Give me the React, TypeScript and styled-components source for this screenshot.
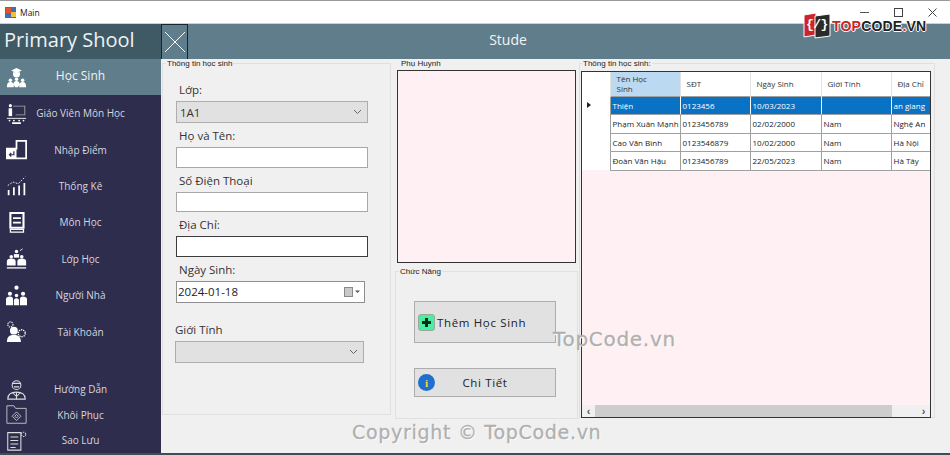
import React from 'react';
import styled, { createGlobalStyle } from 'styled-components';

const GlobalStyle = createGlobalStyle`
  html, body {
    margin: 0;
    padding: 0;
    overflow: hidden;
    background: #f0f0f0;
  }
  * { box-sizing: border-box; }
`;

const uiFont = `"Open Sans", "Noto Sans", sans-serif`;
const smallFont = `"Liberation Sans", Arial, sans-serif`;

const IconBase: React.FC<{ size?: number; children: React.ReactNode }> = ({ size = 24, children }) => (
  <svg width={size} height={size} viewBox="0 0 24 24" fill="#fff" stroke="none">
    {children}
  </svg>
);

const StudentIcon = () => (
  <IconBase>
    <path d="M12 1l6 3-6 3-6-3z" />
    <path d="M8 6h8v2a4 4 0 0 1-8 0z" />
    <circle cx="5" cy="15" r="2" />
    <circle cx="12" cy="14" r="2" />
    <circle cx="19" cy="15" r="2" />
    <path d="M1 23c0-4 1-6 4-6s4 2 4 6zM8.5 20c0-3 1-4 3.500-4s3.500 1 3.500 4l-2 3h-3zM15 23c0-4 1-6 4-6s4 2 4 6z" />
  </IconBase>
);
const TeacherIcon = () => (
  <IconBase>
    <path d="M8 3h14v11H11v-1h10V4H8z" fill="#aaa" />
    <circle cx="5" cy="3" r="1.800" />
    <path d="M3 6h4v9H3z" />
    <path d="M1 17h22v1H1z" />
    <circle cx="4" cy="20" r="1" /><circle cx="9" cy="20" r="1" /><circle cx="15" cy="20" r="1" /><circle cx="20" cy="20" r="1" />
    <path d="M7 22h10v2H7z" />
  </IconBase>
);
const EntryIcon = () => (
  <IconBase>
    <path d="M12 2h11v20H1V11h11z" fill="none" stroke="#fff" strokeWidth="2" />
    <path d="M1 11h11v11H1z" />
    <path d="M9 14v4H4m2-2-2 2 2 2" fill="none" stroke="#2f2d4e" strokeWidth="1.400" />
  </IconBase>
);
const ChartIcon = () => (
  <IconBase>
    <path d="M2 17h2v6H2zM8 14h2v9H8zM14 12h2v11h-2zM20 9h2v14h-2z" />
    <path d="M2 12l6-4 6 2 8-8" fill="none" stroke="#fff" strokeWidth="1" strokeDasharray="2 1.500" />
  </IconBase>
);
const BookIcon = () => (
  <IconBase>
    <path d="M5 1h15v17H5z" fill="none" stroke="#fff" strokeWidth="2.400" />
    <path d="M8 6h9v2H8zM8 11h9v2H8z" />
    <path d="M5 20h15v3H5z" fill="none" stroke="#fff" strokeWidth="1.400" />
  </IconBase>
);
const ClassIcon = () => (
  <IconBase>
    <circle cx="12" cy="4" r="2" />
    <path d="M9 7h6v4H9z" />
    <circle cx="6" cy="10" r="2" /><circle cx="18" cy="10" r="2" />
    <path d="M1 20v-5c0-2 2-3 5-3s5 1 5 3v5zM13 20v-5c0-2 2-3 5-3s5 1 5 3v5z" />
    <path d="M1 22h22v1.500H1z" />
    <path d="M16 3l3-2" stroke="#fff" strokeWidth="1" />
  </IconBase>
);
const FamilyIcon = () => (
  <IconBase>
    <circle cx="12" cy="3" r="2.400" />
    <circle cx="4.500" cy="10" r="2.400" />
    <circle cx="19.500" cy="10" r="2.400" />
    <circle cx="12" cy="12" r="2" />
    <path d="M0 23v-7c0-2 2-3 4.500-3S8 14 8 16v7zM16 23v-7c0-2 1-3 3.500-3s4.500 1 4.500 3v7zM9 23v-5c0-2 1-3 3-3s3 1 3 3v5z" />
  </IconBase>
);
const AccountIcon = () => (
  <IconBase>
    <circle cx="9" cy="11" r="4.500" />
    <path d="M1 24c0-6 3-8 8-8s8 2 8 8z" />
    <circle cx="5" cy="4" r="3" fill="none" stroke="#fff" strokeWidth="1.200" strokeDasharray="1.500 1" />
    <circle cx="18" cy="14" r="4" fill="none" stroke="#fff" strokeWidth="1.600" strokeDasharray="1.500 1" />
  </IconBase>
);
const GuideIcon = () => (
  <IconBase>
    <g fill="none" stroke="#ddd" strokeWidth="1.200">
      <circle cx="12" cy="7" r="5" />
      <path d="M7 5h10M9 9h6" />
      <path d="M2 23c0-6 4-8 10-8s10 2 10 8z" />
      <path d="M12 15v8M8 16l4 4 4-4" />
    </g>
  </IconBase>
);
const RestoreIcon = () => (
  <IconBase>
    <g fill="none" stroke="#ccc" strokeWidth="1">
      <path d="M1 2h8l2 3h12v17H1z" />
      <path d="M12 9l5 5-5 5-5-5z" />
      <path d="M12 12l2 2-2 2-2-2z" />
    </g>
  </IconBase>
);
const BackupIcon = () => (
  <IconBase>
    <g fill="none" stroke="#ddd" strokeWidth="1.200">
      <path d="M2 3h15v20H2z" />
      <path d="M5 8h9M5 12h9M5 16h9M5 20h6" />
      <circle cx="20" cy="5" r="2.500" strokeDasharray="1.500 1" />
    </g>
  </IconBase>
);

const navItems = [
  { label: 'Học Sinh', icon: <StudentIcon />, active: true },
  { label: 'Giáo Viên Môn Học', icon: <TeacherIcon /> },
  { label: 'Nhập Điểm', icon: <EntryIcon /> },
  { label: 'Thống Kê', icon: <ChartIcon /> },
  { label: 'Môn Học', icon: <BookIcon /> },
  { label: 'Lớp Học', icon: <ClassIcon /> },
  { label: 'Người Nhà', icon: <FamilyIcon /> },
  { label: 'Tài Khoản', icon: <AccountIcon /> },
];

const footerItems = [
  { label: 'Hướng Dẫn', icon: <GuideIcon /> },
  { label: 'Khôi Phục', icon: <RestoreIcon /> },
  { label: 'Sao Lưu', icon: <BackupIcon /> },
];

const students = [
  { name: 'Thiện', phone: '0123456', born: '10/03/2023', gender: '', address: 'an giang' },
  { name: 'Phạm Xuân Mạnh', phone: '0123456789', born: '02/02/2000', gender: 'Nam', address: 'Nghệ An' },
  { name: 'Cao Văn Bình', phone: '0123546879', born: '10/02/2000', gender: 'Nam', address: 'Hà Nội' },
  { name: 'Đoàn Văn Hậu', phone: '0123456789', born: '22/05/2023', gender: 'Nam', address: 'Hà Tây' },
];

const App: React.FC = () => (
  <Window>
    <GlobalStyle />
    <TitleBar>
      <svg width="11" height="11" viewBox="0 0 11 11">
        <rect width="11" height="11" fill="#3f6fb5" />
        <rect x="1" y="1" width="5" height="5" fill="#e2552b" />
        <rect x="6" y="5" width="5" height="5" fill="#f2c230" />
      </svg>
      <TitleText>Main</TitleText>
      <WindowControls>
        <svg width="11" height="11" viewBox="0 0 11 11"><path d="M1 5.500h9" stroke="#555" /></svg>
        <svg width="11" height="11" viewBox="0 0 11 11"><rect x="1.500" y="1.500" width="8" height="8" fill="none" stroke="#444" /></svg>
        <svg width="11" height="11" viewBox="0 0 11 11"><path d="M1.500 1.500l8 8M9.500 1.500l-8 8" stroke="#444" /></svg>
      </WindowControls>
    </TitleBar>

    <Header>
      <Brand>Primary Shool</Brand>
      <ToggleButton>
        <svg width="22" height="22" viewBox="0 0 22 22">
          <path d="M1 1l20 20M21 1L1 21" stroke="#fff" strokeWidth="1" />
        </svg>
      </ToggleButton>
      <HeaderTitle>Stude</HeaderTitle>
    </Header>

    <Body>
      <Sidebar>
        <NavGroup>
          {navItems.map((item) => (
            <NavItem key={item.label} $active={item.active}>
              <NavIcon>{item.icon}</NavIcon>
              <NavLabel $active={item.active}>{item.label}</NavLabel>
            </NavItem>
          ))}
        </NavGroup>
        <FooterGroup>
          {footerItems.map((item) => (
            <FooterItem key={item.label}>
              <NavIcon>{item.icon}</NavIcon>
              <NavLabel>{item.label}</NavLabel>
            </FooterItem>
          ))}
        </FooterGroup>
      </Sidebar>

      <Main>
        <FormGroup>
          <GroupLegend $offset={-10}>Thông tin học sinh</GroupLegend>
          <FieldLabel>Lớp:</FieldLabel>
          <SelectBox>
            <span>1A1</span>
            <Chevron />
          </SelectBox>
          <FieldLabel>Họ và Tên:</FieldLabel>
          <TextBox />
          <FieldLabel>Số Điện Thoại</FieldLabel>
          <TextBox />
          <FieldLabel>Địa Chỉ:</FieldLabel>
          <TextBox $focused />
          <FieldLabel>Ngày Sinh:</FieldLabel>
          <DateBox>
            <span>2024-01-18</span>
            <svg width="16" height="10" viewBox="0 0 16 10">
              <rect x="0.500" y="0.500" width="8" height="9" fill="#c9c9c9" stroke="#8a8a8a" />
              <path d="M11 3.500h5l-2.500 2.500z" fill="#555" />
            </svg>
          </DateBox>
          <GenderField>
            <GenderLabel>Giới Tính</GenderLabel>
            <SelectBox $narrow>
              <span />
              <Chevron />
            </SelectBox>
          </GenderField>
        </FormGroup>

        <MiddleColumn>
          <ParentGroup>
            <GroupLegend $offset={3}>Phụ Huynh</GroupLegend>
            <PinkPanel />
          </ParentGroup>
          <ActionGroup>
            <GroupLegend $offset={-15}>Chức Năng</GroupLegend>
            <ActionButton $tall>
              <AddIcon>
                <svg width="9" height="9" viewBox="0 0 9 9">
                  <path d="M3 0h3v3h3v3H6v3H3V6H0V3h3z" fill="#0b2a1c" />
                </svg>
              </AddIcon>
              <ActionLabel>Thêm Học Sinh</ActionLabel>
            </ActionButton>
            <ActionButton>
              <InfoIcon>i</InfoIcon>
              <ActionLabel $center>Chi Tiết</ActionLabel>
            </ActionButton>
          </ActionGroup>
        </MiddleColumn>

        <GridGroup>
          <GroupLegend $offset={1}>Thông tin học sinh:</GroupLegend>
          <GridFrame>
            <GridArea>
              <DataTable>
                <colgroup>
                  <col width="28" />
                  <col width="70" />
                  <col width="70" />
                  <col width="71" />
                  <col width="70" />
                  <col width="39" />
                </colgroup>
                <thead>
                  <tr>
                    <HeadCell />
                    <HeadCell $selected>
                      <HeadWrap>Tên Học Sinh</HeadWrap>
                    </HeadCell>
                    <HeadCell>SĐT</HeadCell>
                    <HeadCell>Ngày Sinh</HeadCell>
                    <HeadCell>Giới Tính</HeadCell>
                    <HeadCell>Địa Chỉ</HeadCell>
                  </tr>
                </thead>
                <tbody>
                  {students.map((s, i) => (
                    <tr key={s.name}>
                      <RowHeader>{i === 0 && <RowArrow />}</RowHeader>
                      <BodyCell $selected={i === 0}>{s.name}</BodyCell>
                      <BodyCell $selected={i === 0}>{s.phone}</BodyCell>
                      <BodyCell $selected={i === 0}>{s.born}</BodyCell>
                      <BodyCell $selected={i === 0}>{s.gender}</BodyCell>
                      <BodyCell $selected={i === 0}>{s.address}</BodyCell>
                    </tr>
                  ))}
                </tbody>
              </DataTable>
            </GridArea>
            <ScrollBar>
              <ScrollArrow>‹</ScrollArrow>
              <ScrollThumb />
              <ScrollArrow>›</ScrollArrow>
            </ScrollBar>
          </GridFrame>
        </GridGroup>
      </Main>
    </Body>

    <LogoMark>
      <svg width="28" height="27" viewBox="0 0 28 27">
        <path d="M1 3l12-2v22L1 25z" fill="#c9252b" stroke="#fff" />
        <path d="M12 4l15-2v22l-15 2z" fill="#2a2a2a" stroke="#fff" />
      </svg>
      <LogoGlyph>{'{/}'}</LogoGlyph>
      <LogoText>
        <LogoAccent>TOP</LogoAccent>CODE<LogoAccent>.</LogoAccent>VN
      </LogoText>
    </LogoMark>
    <WatermarkSite>TopCode.vn</WatermarkSite>
    <WatermarkCopy>Copyright © TopCode.vn</WatermarkCopy>
  </Window>
);

const Chevron = () => (
  <svg width="9" height="6" viewBox="0 0 9 6">
    <path d="M1 1l3.500 3.500L8 1" fill="none" stroke="#666" strokeWidth="1" />
  </svg>
);

const Window = styled.div`
  position: relative;
  width: 950px;
  height: 455px;
  display: flex;
  flex-direction: column;
  overflow: hidden;
  background: #f0f0f0;
  border-top: 1px solid #9b9b9b;
  border-bottom: 2px solid #3d4d5a;
`;

const TitleBar = styled.div`
  height: 23px;
  flex: none;
  display: flex;
  align-items: center;
  padding: 0 12px 0 5px;
  background: #fff;
  border-bottom: 1px solid #cfcfcf;
`;

const TitleText = styled.span`
  margin-left: 4px;
  font: 8.500px ${uiFont};
  color: #222;
`;

const WindowControls = styled.div`
  margin-left: auto;
  display: flex;
  gap: 23px;
`;

const Header = styled.div`
  height: 35px;
  flex: none;
  display: flex;
  background: #607d8b;
`;

const Brand = styled.div`
  width: 161px;
  flex: none;
  padding: 0 0 4px 4px;
  display: flex;
  align-items: center;
  background: #3f5a64;
  color: #eef2f4;
  font: 20px ${uiFont};
  white-space: nowrap;
`;

const ToggleButton = styled.div`
  width: 27px;
  flex: none;
  display: flex;
  align-items: center;
  justify-content: center;
  background: #607d8b;
  border: 1px solid #15262e;
  border-bottom: none;
`;

const HeaderTitle = styled.div`
  flex: 1;
  padding: 0 122px 4px 0;
  display: flex;
  align-items: center;
  justify-content: center;
  color: #f2f5f6;
  font: 14px ${uiFont};
`;

const Body = styled.div`
  flex: 1;
  min-height: 0;
  display: flex;
`;

const Sidebar = styled.nav`
  width: 161px;
  flex: none;
  display: flex;
  flex-direction: column;
  justify-content: space-between;
  background: #2f2d4e;
`;

const NavGroup = styled.div`
  display: flex;
  flex-direction: column;
`;

const FooterGroup = styled.div`
  display: flex;
  flex-direction: column;
`;

const NavItem = styled.div<{ $active?: boolean }>`
  height: ${(p) => (p.$active ? 36 : 36.400)}px;
  display: grid;
  grid-template-columns: 32px 1fr 32px;
  align-items: center;
  background: ${(p) => (p.$active ? '#607d8b' : 'transparent')};
`;

const FooterItem = styled.div`
  height: 25.500px;
  display: grid;
  grid-template-columns: 32px 1fr 32px;
  align-items: center;
`;

const NavIcon = styled.div`
  display: flex;
  justify-content: center;
  line-height: 0;
  svg {
    width: 21px;
    height: 21px;
  }
`;

const NavLabel = styled.span<{ $active?: boolean }>`
  padding-bottom: ${(p) => (p.$active ? 3 : 0)}px;
  text-align: center;
  color: ${(p) => (p.$active ? '#eef2f4' : '#d6d6de')};
  font: ${(p) => (p.$active ? 12 : 10)}px ${uiFont};
  white-space: nowrap;
`;

const Main = styled.main`
  flex: 1;
  min-width: 0;
  display: grid;
  grid-template-columns: 232px 183px 356px;
  column-gap: 1px;
  align-items: start;
  padding: 0 0 0 1px;
`;

const GroupBox = styled.fieldset`
  margin: 0;
  padding: 0;
  min-width: 0;
  border: 1px solid #e0e0e0;
`;

const GroupLegend = styled.legend<{ $offset: number }>`
  margin-left: ${(p) => p.$offset}px;
  padding: 0 1px;
  font: 8px/9px ${smallFont};
  color: #222;
`;

const FormGroup = styled(GroupBox)`
  width: 229px;
  height: 356px;
  padding: 9px 0 0 13px;
`;

const FieldLabel = styled.div`
  height: 13px;
  margin: 6px 0 5px 3px;
  font: 11.500px/13px ${uiFont};
  color: #333;
`;

const SelectBox = styled.div<{ $narrow?: boolean }>`
  width: ${(p) => (p.$narrow ? 189 : 192)}px;
  height: 22px;
  padding: 0 5px 0 3px;
  display: flex;
  align-items: center;
  justify-content: space-between;
  background: #e1e1e1;
  border: 1px solid #adadad;
  font: 11.500px ${uiFont};
  color: #333;
`;

const TextBox = styled.div<{ $focused?: boolean }>`
  width: 192px;
  height: 20.500px;
  background: #fff;
  border: 1px solid ${(p) => (p.$focused ? '#3c3c3c' : '#a8a8a8')};
`;

const DateBox = styled.div`
  width: 189px;
  height: 22px;
  margin-top: 1px;
  padding: 0 4px 0 1px;
  display: flex;
  align-items: center;
  justify-content: space-between;
  background: #fff;
  border: 1px solid #8f8f8f;
  font: 11.500px ${uiFont};
  color: #222;
`;

const GenderField = styled.div`
  margin: 20px 0 0 -1px;
`;

const GenderLabel = styled.div`
  height: 13px;
  margin-bottom: 5px;
  font: 11.500px/13px ${uiFont};
  color: #333;
`;

const MiddleColumn = styled.div`
  display: flex;
  flex-direction: column;
  gap: 1px;
`;

const ParentGroup = styled(GroupBox)`
  height: 207px;
  padding: 2px 1px 2px 1px;
  border-color: transparent;
`;

const PinkPanel = styled.div`
  height: 193px;
  background: #fff0f3;
  border: 1px solid #333;
`;

const ActionGroup = styled(GroupBox)`
  height: 152px;
  padding: 25px 21px 0 18px;
`;

const ActionButton = styled.div<{ $tall?: boolean }>`
  height: ${(p) => (p.$tall ? 42 : 29)}px;
  margin-bottom: 25px;
  padding-left: 3px;
  display: flex;
  align-items: center;
  background: #e1e1e1;
  border: 1px solid #adadad;
`;

const AddIcon = styled.span`
  width: 17px;
  height: 17px;
  flex: none;
  display: flex;
  align-items: center;
  justify-content: center;
  background: #45f0a0;
  border: 1px solid #9aa89f;
  border-radius: 3px;
`;

const InfoIcon = styled.span`
  width: 17px;
  height: 17px;
  flex: none;
  display: flex;
  align-items: center;
  justify-content: center;
  border-radius: 50%;
  background: #1f6fd0;
  color: #f6d84a;
  font: bold 11px "Liberation Serif", serif;
`;

const ActionLabel = styled.span<{ $center?: boolean }>`
  flex: ${(p) => (p.$center ? 1 : 'none')};
  margin-left: 2px;
  padding-right: ${(p) => (p.$center ? 22 : 0)}px;
  text-align: ${(p) => (p.$center ? 'center' : 'left')};
  font: 11.500px ${uiFont};
  letter-spacing: 0.650px;
  color: #222;
`;

const GridGroup = styled(GroupBox)`
  height: 359px;
  padding: 3px 3px 0 1px;
`;

const GridFrame = styled.div`
  height: 347px;
  display: flex;
  flex-direction: column;
  background: #fff0f3;
  border: 1px solid #333;
`;

const GridArea = styled.div`
  flex: 1;
  min-height: 0;
  overflow: hidden;
`;

const DataTable = styled.table`
  width: 348px;
  table-layout: fixed;
  border-collapse: collapse;
  font: 8px ${uiFont};
  color: #222;
`;

const HeadCell = styled.th<{ $selected?: boolean }>`
  height: 24px;
  padding: 0 0 0 6px;
  overflow: hidden;
  white-space: nowrap;
  text-align: left;
  font-weight: normal;
  color: #333;
  background: ${(p) => (p.$selected ? '#bbd9f1' : '#fff')};
  border-right: 1px solid #e3e3e3;
`;

const HeadWrap = styled.div`
  width: 34px;
  white-space: normal;
  line-height: 10px;
`;

const RowHeader = styled.td`
  height: 18.500px;
  padding: 0 0 0 5px;
  background: #fff;
`;

const RowArrow = styled.span`
  display: block;
  width: 0;
  height: 0;
  border-left: 4px solid #222;
  border-top: 3px solid transparent;
  border-bottom: 3px solid transparent;
`;

const BodyCell = styled.td<{ $selected?: boolean }>`
  height: 18.500px;
  padding: 0 0 0 2px;
  overflow: hidden;
  white-space: nowrap;
  color: ${(p) => (p.$selected ? '#fff' : '#222')};
  background: ${(p) => (p.$selected ? '#0a72c4' : '#fff')};
  border: 1px solid #a0a0a0;
  border-right-color: ${(p) => (p.$selected ? '#fff' : '#a0a0a0')};
`;

const ScrollBar = styled.div`
  height: 12px;
  flex: none;
  display: flex;
  background: #f0f0f0;
`;

const ScrollArrow = styled.span`
  width: 13px;
  flex: none;
  display: flex;
  align-items: center;
  justify-content: center;
  font: bold 11px/10px ${smallFont};
  color: #555;
`;

const ScrollThumb = styled.div`
  width: 297px;
  background: #cdcdcd;
  margin-right: auto;
`;

const LogoMark = styled.div`
  position: absolute;
  top: 11px;
  left: 803px;
  display: flex;
  align-items: center;
`;

const LogoGlyph = styled.span`
  position: absolute;
  left: 3px;
  top: 5px;
  color: #fff;
  font: bold 13px "Liberation Mono", monospace;
  letter-spacing: -0.500px;
`;

const LogoText = styled.span`
  margin-left: 1px;
  font: bold 14px "Liberation Sans", sans-serif;
  letter-spacing: 0.200px;
  color: #222;
  text-shadow: 1px 0 0 #fff, -1px 0 0 #fff, 0 1px 0 #fff, 0 -1px 0 #fff;
`;

const LogoAccent = styled.span`
  color: #c9252b;
`;

const WatermarkSite = styled.div`
  position: absolute;
  top: 326px;
  left: 553px;
  font: 20px "DejaVu Sans", sans-serif;
  letter-spacing: 0.700px;
  color: #b0b0b0;
  -webkit-text-stroke: 0.300px #b0b0b0;
  text-shadow: 1px 1px 0 #fff;
`;

const WatermarkCopy = styled.div`
  position: absolute;
  top: 420px;
  left: 352px;
  font: 19px "DejaVu Sans", sans-serif;
  letter-spacing: 0.700px;
  color: #b0b0b0;
  -webkit-text-stroke: 0.300px #b0b0b0;
  text-shadow: 1px 1px 0 #fff;
`;

export default App;
